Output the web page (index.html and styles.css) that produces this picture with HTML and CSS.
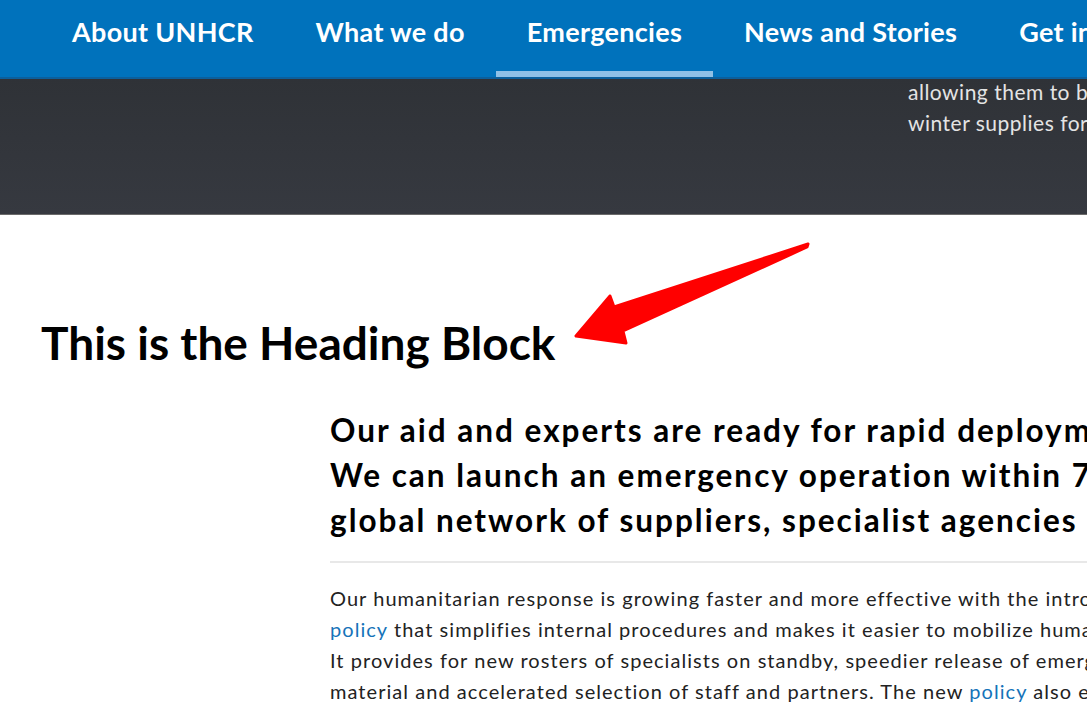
FILE: index.html
```html
<!DOCTYPE html>
<html lang="en">
<head>
<meta charset="utf-8">
<title>Emergencies – UNHCR</title>
<link rel="stylesheet" href="styles.css">
</head>
<body>
<header class="nav">
  <a class="nav-item" href="#">About UNHCR</a>
  <a class="nav-item" href="#">What we do</a>
  <a class="nav-item active" href="#">Emergencies</a>
  <a class="nav-item" href="#">News and Stories</a>
  <a class="nav-item" href="#">Get involved</a>
</header>
<section class="hero">
  <div class="hero-spacer"></div>
  <p class="hero-text">allowing them to buy food, medicine and<br>winter supplies for their families.</p>
</section>
<main class="content">
  <h1 class="heading">This is the Heading Block</h1>
  <div class="body-col">
    <p class="lead">Our aid and experts are ready for rapid deployment.<br>We can launch an emergency operation within 72 hours, backed by a<br>global network of suppliers, specialist agencies and partners.</p>
    <hr class="rule">
    <p class="text">Our humanitarian response is growing faster and more effective with the introduction of a new emergency<br><a href="#">policy</a> that simplifies internal procedures and makes it easier to mobilize human resources.<br>It provides for new rosters of specialists on standby, speedier release of emergency funds and<br>material and accelerated selection of staff and partners. The new <a href="#">policy</a> also ensures that</p>
  </div>
</main>
<svg class="arrow" width="260" height="120" viewBox="560 230 260 120" aria-hidden="true">
  <polygon points="808,244 614,307 610,296 576,336 626,343 623,331 807,247" fill="#ff0000" stroke="#ff0000" stroke-width="3" stroke-linejoin="round"/>
</svg>
</body>
</html>
```
FILE: styles.css
```css
html, body {
  margin: 0;
  padding: 0;
}
body {
  width: 1087px;
  height: 713px;
  overflow: hidden;
  position: relative;
  font-family: "Lato", "Noto Sans", sans-serif;
  background: #ffffff;
  color: #000000;
}
.nav {
  display: flex;
  align-items: stretch;
  height: 77px;
  padding-left: 40px;
  background: #0072bc;
  border-bottom: 2px solid #0b5f9c;
  white-space: nowrap;
}
.nav-item {
  display: flex;
  align-items: center;
  padding: 0 31px 8px;
  color: #ffffff;
  text-decoration: none;
  font-weight: 700;
  font-size: 27px;
  letter-spacing: 0.3px;
  flex: none;
  border-bottom: 6px solid transparent;
}
.nav-item:first-child {
  padding-left: 32px;
}
.nav-item.active {
  border-bottom-color: #8fc0e6;
}
.hero {
  display: grid;
  grid-template-columns: 908px 1fr;
  height: 135px;
  background: linear-gradient(180deg, #2f3237 0%, #363940 100%);
  border-bottom: 1px solid #6a6a6a;
  overflow: hidden;
}
.hero-text {
  margin: -3px 0 0;
  color: #e4e4e4;
  font-size: 21px;
  line-height: 31px;
  letter-spacing: 0.5px;
  white-space: nowrap;
}
.content {
  padding: 0 0 0 41px;
}
.heading {
  margin: 100px 0 0;
  font-size: 46px;
  line-height: 56px;
  font-weight: 700;
  white-space: nowrap;
}
.body-col {
  margin-left: 289px;
  padding-top: 37px;
}
.lead {
  margin: 0;
  font-size: 31.5px;
  line-height: 45px;
  font-weight: 700;
  letter-spacing: 2px;
  white-space: nowrap;
}
.rule {
  margin: 18px 0 0;
  border: 0;
  border-top: 2px solid #e8e8e8;
  width: 800px;
}
.text {
  margin: 20px 0 0;
  font-size: 20px;
  line-height: 31px;
  letter-spacing: 1.05px;
  color: #222222;
  white-space: nowrap;
}
.text a {
  color: #1573b9;
  text-decoration: none;
}
.arrow {
  position: absolute;
  left: 560px;
  top: 230px;
}
```
